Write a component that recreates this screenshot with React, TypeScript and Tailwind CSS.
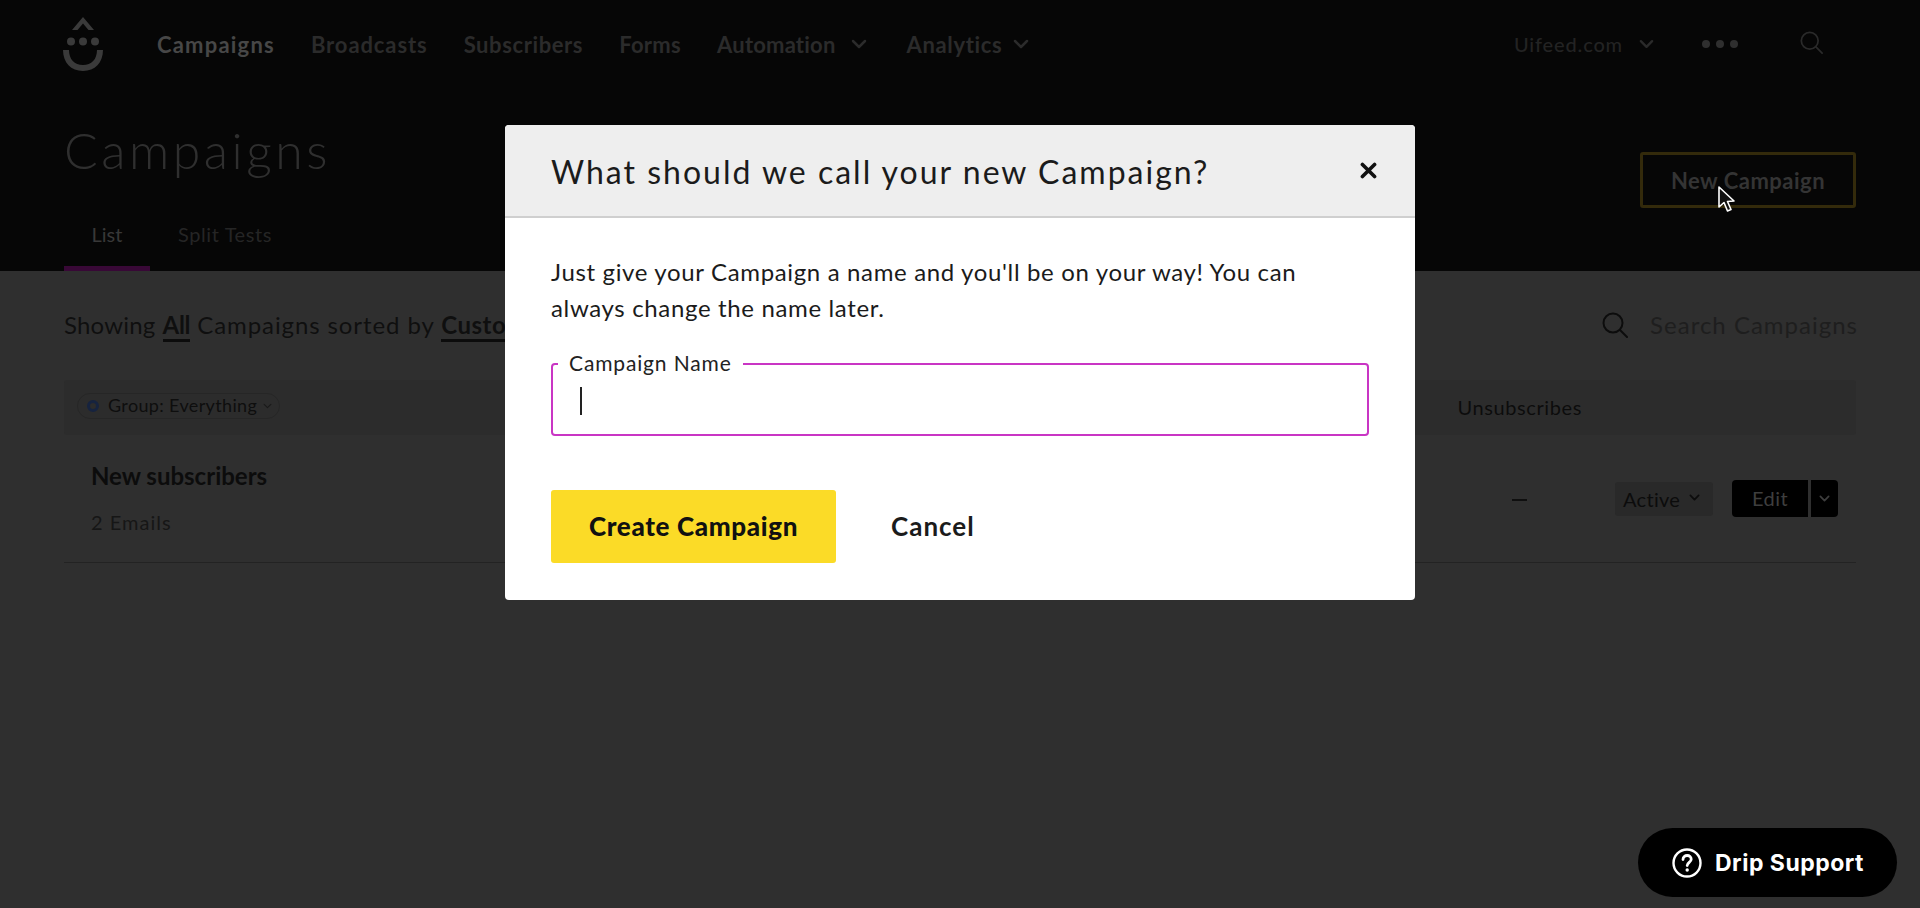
import React from "react";

const Chevron = ({ className, w = 2.5 }: { className: string; w?: number }) => (
  <svg viewBox="0 0 16 10" fill="none" stroke="currentColor" strokeWidth={w} strokeLinecap="round" strokeLinejoin="round" className={className}>
    <path d="M2 2l6 6 6-6" />
  </svg>
);

const Search = ({ className, w = 2 }: { className: string; w?: number }) => (
  <svg viewBox="0 0 26 26" fill="none" stroke="currentColor" strokeWidth={w} strokeLinecap="round" className={className}>
    <circle cx="11" cy="11" r="9.5" />
    <path d="M18 18l7 7" />
  </svg>
);

const NavItem = ({ label, active, chevron, className, track }: { label: string; active?: boolean; chevron?: string; className?: string; track: string }) => (
  <div className={`flex items-center ${className ?? ""}`}>
    <span className={`text-[22px] font-bold ${track} ${active ? "text-[#474747]" : "text-[#2b2b2b]"}`}>{label}</span>
    {chevron && <Chevron className={`w-[16px] h-[10px] text-[#2b2b2b] ${chevron}`} />}
  </div>
);

export default function App() {
  return (
    <div className="relative h-[908px] w-full overflow-hidden bg-[#2f2f2f] font-['Lato',sans-serif] text-[#111]">
      <header className="h-[271px] bg-[#060606] px-[64px]">
        <nav className="flex h-[88px] items-center">
          <svg viewBox="0 0 40 54" className="-ml-[1px] h-[54px] w-[40px]" fill="#3a3a3a" aria-label="Drip logo">
            <path d="M20 0l11 13h-5.500L20 6.500 14.500 13H9z" />
            <circle cx="8" cy="24.5" r="4" />
            <circle cx="20" cy="24.5" r="4" />
            <circle cx="32" cy="24.5" r="4" />
            <path d="M0 33h6c0 9.500 5.500 15 14 15s14-5.500 14-15h6c0 12.500-8 21-20 21S0 45.500 0 33z" />
          </svg>
          <NavItem label="Campaigns" active track="tracking-[1.2px]" className="ml-[54px]" />
          <NavItem label="Broadcasts" track="tracking-[0.9px]" className="ml-[36px]" />
          <NavItem label="Subscribers" track="tracking-[0.6px]" className="ml-[36px]" />
          <NavItem label="Forms" track="tracking-[0.3px]" className="ml-[36px]" />
          <NavItem label="Automation" track="tracking-[0.2px]" chevron="ml-[15px]" className="ml-[36px]" />
          <NavItem label="Analytics" track="tracking-[0.65px]" chevron="ml-[11px]" className="ml-[40px]" />
          <div className="ml-auto flex items-center pr-[33px]">
            <span className="text-[20px] font-medium tracking-[0.85px] text-[#232323]">Uifeed.com</span>
            <Chevron className="ml-[16px] h-[10px] w-[15px] text-[#2a2a2a]" />
            <div className="ml-[48px] flex gap-[6px]">
              <span className="h-[8px] w-[8px] rounded-full bg-[#2f2f2f]" />
              <span className="h-[8px] w-[8px] rounded-full bg-[#2f2f2f]" />
              <span className="h-[8px] w-[8px] rounded-full bg-[#2f2f2f]" />
            </div>
            <Search className="ml-[62px] mb-[4px] h-[23px] w-[23px] text-[#2a2a2a]" />
          </div>
        </nav>
        <div className="flex justify-between">
          <div>
            <h1 className="mt-[32px] text-[50px] font-light leading-[60px] tracking-[3.5px] text-[#2f2f2f]">Campaigns</h1>
            <div className="mt-[26px] flex">
              <div className="flex h-[65px] w-[86px] items-center justify-center border-b-[5px] border-[#380836] pb-[4px] text-[20px] text-[#383838]">List</div>
              <div className="flex h-[65px] items-center pl-[28px] pb-[9px] text-[20px] tracking-[0.6px] text-[#252525]">Split Tests</div>
            </div>
          </div>
          <button className="mt-[64px] flex h-[56px] w-[216px] items-center justify-center rounded-[3px] border-[3px] border-[#332a0b] text-[22px] font-bold tracking-[0.5px] text-[#343434]">New Campaign</button>
        </div>
      </header>

      <main className="px-[64px]">
        <div className="mt-[36px] flex h-[36px] items-center justify-between">
          <div className="text-[24px] tracking-[0.9px] text-[#0f0f0f]">
            <span className="tracking-[0.2px]">Showing</span> <span className="border-b-[3px] border-[#0c0c0c] font-bold tracking-[-0.3px]">All</span> Campaigns sorted by <span className="border-b-[3px] border-[#0c0c0c] font-bold tracking-[0.55px]">Custom</span>
          </div>
          <div className="-mr-[2px] flex items-center">
            <Search className="h-[26px] w-[26px] text-[#0c0c0c]" />
            <span className="ml-[22px] text-[24px] tracking-[1px] text-[#1e1e1e]">Search Campaigns</span>
          </div>
        </div>

        <div className="mt-[37px] flex h-[55px] items-center justify-between rounded-[3px] bg-[#2c2c2c] pl-[13px] pr-[274px]">
          <div className="mb-[4px] flex h-[26px] w-[203px] items-center rounded-full border border-[#262626] pl-[9px]">
            <span className="h-[12px] w-[12px] rounded-full border-[3px] border-[#16233f]" />
            <span className="ml-[9px] text-[18px] tracking-[0.35px] text-[#0e0e0e]">Group: Everything</span>
            <Chevron className="ml-[6px] h-[6px] w-[9px] text-[#1a1a1a]" w={2} />
          </div>
          <span className="mb-[1px] text-[20px] tracking-[0.6px] text-[#0c0c0c]">Unsubscribes</span>
        </div>

        <div className="flex h-[128px] items-center justify-between border-b border-[#232323] pl-[27px] pr-[18px]">
          <div className="flex flex-col">
            <span className="text-[24px] font-bold leading-[28px] text-[#0c0c0c]">New subscribers</span>
            <span className="mt-[18px] text-[20px] leading-[28px] tracking-[1px] text-[#161616]">2 Emails</span>
          </div>
          <div className="flex items-center">
            <div className="flex w-[125px] justify-center">
              <span className="mt-[3px] h-[2px] w-[15px] bg-[#0f0f0f]" />
            </div>
            <div className="ml-[33px] flex h-[34px] w-[98px] items-center rounded-[3px] bg-[#292929] pl-[8px]">
              <span className="text-[20px] tracking-[0.3px] text-[#0c0c0c]">Active</span>
              <Chevron className="ml-[9px] mb-[2px] h-[7px] w-[11px] text-[#0c0c0c]" />
            </div>
            <button className="ml-[19px] flex h-[37px] w-[76px] items-center justify-center rounded-l-[4px] bg-black pb-[1px] text-[20px] tracking-[0.4px] text-[#3e3e3e]">Edit</button>
            <button className="ml-[3px] flex h-[37px] w-[27px] items-center justify-center rounded-r-[4px] bg-black">
              <Chevron className="h-[7px] w-[11px] text-[#3e3e3e]" />
            </button>
          </div>
        </div>
      </main>

      {/* cursor */}
      <svg viewBox="0 0 18 28" className="absolute left-[1718px] top-[186px] h-[28px] w-[18px]">
        <path d="M1 1v20l5-4.500 3.500 8.500 3.500-1.500-3.500-8 6.500-.5z" fill="#111" stroke="#fff" strokeWidth="1.600" strokeLinejoin="round" />
      </svg>

      {/* modal */}
      <div className="absolute left-[505px] top-[125px] h-[475px] w-[910px] overflow-hidden rounded-[4px] bg-white">
        <div className="flex h-[93px] items-center justify-between border-b-2 border-[#cfcfcf] bg-[#eeeeee] pl-[46px] pr-[38px]">
          <h2 className="pt-[2px] text-[32px] tracking-[2px] text-[#1b1b1b]">What should we call your new Campaign?</h2>
          <svg viewBox="0 0 14 14" className="h-[17px] w-[17px]" stroke="#111" strokeWidth="3" strokeLinecap="round">
            <path d="M2 2l10 10M12 2L2 12" />
          </svg>
        </div>
        <div className="px-[46px] pt-[36px]">
          <p className="text-[24px] leading-[36px] tracking-[0.65px] text-[#1b1b1b]">
            Just give your Campaign a name and you'll be on your way! You can
            <br />
            always change the name later.
          </p>
          <div className="relative mt-[37px] h-[73px] rounded-[4px] border-2 border-[#c935c4]">
            <span className="absolute left-[5px] top-[-14px] bg-white px-[11px] text-[21px] leading-[24px] tracking-[0.85px] text-[#222]">Campaign Name</span>
            <span className="absolute left-[27px] top-[22px] h-[28px] w-[2px] bg-[#222]" />
          </div>
          <div className="mt-[54px] flex items-center">
            <button className="h-[73px] w-[285px] rounded-[3px] bg-[#fbdb27] text-[26px] font-black tracking-[0.65px] text-[#111]">Create Campaign</button>
            <button className="ml-[55px] text-[26px] font-bold tracking-[1px] text-[#1b1b1b]">Cancel</button>
          </div>
        </div>
      </div>

      {/* support */}
      <button className="absolute left-[1638px] top-[828px] flex h-[69px] w-[259px] items-center rounded-full bg-black pl-[34px] font-['Inter',sans-serif] text-white">
        <svg viewBox="0 0 30 30" fill="none" className="h-[30px] w-[30px]" stroke="#fff" strokeWidth="2.400" strokeLinecap="round">
          <circle cx="15" cy="15" r="13.500" />
          <path d="M11 11.500c0-2.500 2-4 4.200-4s4 1.500 4 3.700c0 3-4 3.300-4 6.300" strokeWidth="2.800" />
          <circle cx="15.200" cy="22" r="1.700" fill="#fff" stroke="none" />
        </svg>
        <span className="ml-[13px] mt-[2px] text-[23px] font-bold tracking-[0.5px]">Drip Support</span>
      </button>
    </div>
  );
}
